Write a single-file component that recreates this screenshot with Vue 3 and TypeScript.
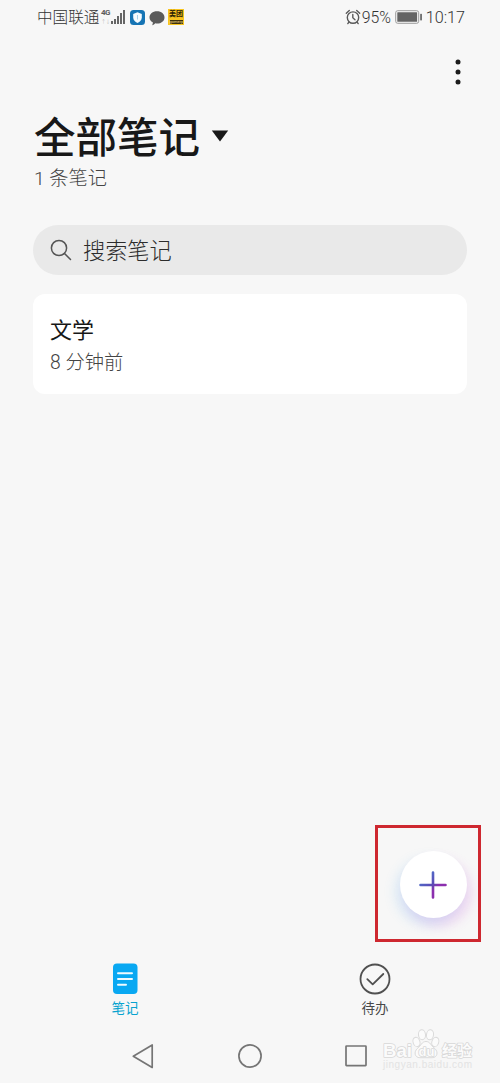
<script setup lang="ts">
import { ref } from 'vue'

interface Note { title: string; time: string }

const notes = ref<Note[]>([{ title: '文学', time: '8 分钟前' }])
const signalBars: number[] = [3, 5, 8, 11, 14]
</script>

<template>
  <main class="screen">
    <header class="status">
      <div class="status-left">
        <span class="carrier">中国联通</span>
        <span class="net"><b>4G</b><i>↑↓</i></span>
        <span class="signal"><i v-for="h in signalBars" :key="h" :style="{ height: h + 'px' }"></i></span>
        <svg class="shield" width="15" height="15" viewBox="0 0 15 15">
          <rect width="15" height="15" rx="3.5" fill="#1674b4" />
          <path d="M7.500 2.300 11.800 4v3.600c0 2.600-1.800 4.300-4.300 5.300-2.500-1-4.300-2.700-4.300-5.300V4Z" fill="#f5fbff" />
          <path d="M7.500 5v4.500" stroke="#a9d0e9" stroke-width="1" />
        </svg>
        <svg class="bubble" width="16" height="15" viewBox="0 0 16 15">
          <path d="M8 .3c4.400 0 7.500 2.600 7.500 6.100S12.400 12.500 8 12.500c-.6 0-1.200 0-1.800-.2-.8 1-1.700 1.700-3 1.900.5-.9.700-1.800.6-2.900C1.700 10.200.5 8.600.5 6.400.5 2.900 3.600.3 8 .3Z" fill="#5b5b5b" />
        </svg>
        <span class="meituan"><b>美团</b><i>gomerp</i></span>
      </div>
      <div class="status-right">
        <svg class="alarm" width="16" height="16" viewBox="0 0 16 16" fill="none" stroke="#5a5a5a" stroke-width="1.400" stroke-linecap="round">
          <circle cx="8" cy="8.600" r="5.700" />
          <path d="M1.300 4.300 4.300 1.500M14.700 4.300 11.700 1.500M7.800 5.500v3.300l2.200 1.900M4 13l-1.200 1.600M12 13l1.200 1.600" />
        </svg>
        <span class="percent">95%</span>
        <svg class="battery" width="28" height="14" viewBox="0 0 28 14">
          <rect x=".7" y=".7" width="23" height="12.600" rx="2" fill="#f5f5f5" stroke="#9b9b9b" />
          <rect x="2.300" y="2.300" width="19.800" height="9.400" rx=".5" fill="#646464" />
          <rect x="25.200" y="3.800" width="1.700" height="6.600" rx=".6" fill="#626262" />
        </svg>
        <span class="clock">10:17</span>
      </div>
    </header>

    <div class="toolbar">
      <svg width="10" height="30" viewBox="0 0 10 30" fill="#1c1c1c">
        <circle cx="5" cy="5" r="2.500" /><circle cx="5" cy="15" r="2.500" /><circle cx="5" cy="25" r="2.500" />
      </svg>
    </div>

    <section class="heading">
      <h1>全部笔记<svg width="18" height="12" viewBox="0 0 18 12"><path d="M.8.500h16.400L9 11.500Z" fill="#191919" /></svg></h1>
      <p>1 条笔记</p>
    </section>

    <div class="search">
      <svg width="22" height="22" viewBox="0 0 22 22" fill="none" stroke="#555" stroke-width="1.500" stroke-linecap="round">
        <circle cx="9" cy="9" r="7.600" /><path d="m14.500 14.500 6 6" />
      </svg>
      <span>搜索笔记</span>
    </div>

    <article v-for="note in notes" :key="note.title" class="note">
      <h2>{{ note.title }}</h2>
      <p>{{ note.time }}</p>
    </article>

    <div class="spacer"></div>

    <div class="highlight">
      <button class="fab" aria-label="新建笔记">
        <svg width="30" height="30" viewBox="0 0 30 30" fill="none" stroke="url(#plus)" stroke-width="2.600" stroke-linecap="round">
          <defs>
            <linearGradient id="plus" gradientUnits="userSpaceOnUse" x1="7" y1="7" x2="23" y2="23">
              <stop offset=".1" stop-color="#5265c5" /><stop offset=".48" stop-color="#5c49b4" /><stop offset=".68" stop-color="#8c2fae" />
            </linearGradient>
          </defs>
          <path d="M15 2.500v25M2.500 15h25" />
        </svg>
      </button>
    </div>

    <nav class="tabs">
      <div class="tab active">
        <svg width="32" height="32" viewBox="0 0 32 32">
          <rect x="4" y=".5" width="24.500" height="30.500" rx="4" fill="#09a8f2" />
          <path d="M9 10.200h14M9 16h14M9 21.800h8" stroke="#effaff" stroke-width="2" stroke-linecap="round" />
        </svg>
        <span>笔记</span>
      </div>
      <div class="tab">
        <svg width="32" height="32" viewBox="0 0 32 32" fill="none" stroke="#505050" stroke-width="1.800">
          <circle cx="16" cy="16" r="14.500" /><path d="m8.300 16.200 5.400 5.200L24.300 11" stroke-linecap="round" stroke-linejoin="round" />
        </svg>
        <span>待办</span>
      </div>
    </nav>

    <footer class="system">
      <svg width="260" height="30" viewBox="0 0 260 30" fill="none" stroke="#757575" stroke-width="1.700" stroke-linejoin="round">
        <path d="M32.200 4v22.400L13.300 15.200Z" /><circle cx="130" cy="15" r="11.100" /><rect x="226" y="5" width="20" height="19.600" rx=".5" />
      </svg>
    </footer>

    <div class="watermark">
      <svg width="94" height="46" viewBox="0 0 94 46">
        <g fill="#fbfbfb" stroke="#dadada" stroke-width="1">
          <ellipse cx="36.500" cy="15" rx="3.400" ry="4.800" transform="rotate(-18 36.500 15)" />
          <ellipse cx="42" cy="7.800" rx="3.500" ry="5" transform="rotate(-5 42 7.800)" />
          <ellipse cx="50" cy="7.800" rx="3.500" ry="5" transform="rotate(7 50 7.800)" />
          <ellipse cx="55.300" cy="15" rx="3.400" ry="4.800" transform="rotate(18 55.300 15)" />
          <path d="M46 14.500c4.300 0 4.900 4.200 8.700 7 3.900 3.300 2.700 9.200-2.600 9.200H39.900c-5.300 0-6.300-5.900-2.500-9.200 3.700-2.800 4.300-7 8.600-7Z" />
        </g>
        <g class="wm">
          <text x="3" y="30" class="wm-brand" textLength="29" lengthAdjust="spacingAndGlyphs">Bai</text>
          <text x="38.500" y="28.500" class="wm-du">du</text>
          <text x="62" y="28.500" class="wm-cn" textLength="30">经验</text>
        </g>
        <text x="3" y="41" class="wm-url" textLength="89">jingyan.baidu.com</text>
      </svg>
    </div>
  </main>
</template>

<style>
body { background: #f7f7f7; }
</style>

<style scoped>
* { box-sizing: border-box; margin: 0; padding: 0; }
.screen { position: relative; width: 500px; height: 1083px; display: flex; flex-direction: column; overflow: hidden; background: #f7f7f7; color: #1a1a1a; font-family: Roboto, "Noto Sans CJK SC", sans-serif; }
i { font-style: normal; }
.status { height: 34px; padding: 0 35px 0 37px; display: flex; justify-content: space-between; align-items: center; color: #5c5c5c; }
.status-left, .status-right { display: flex; align-items: center; height: 34px; }
.carrier { font-size: 15.600px; line-height: 34px; width: 64px; padding-top: 1px; white-space: nowrap; font-weight: 300; color: #333; }
.net { width: 10px; height: 16px; display: flex; flex-direction: column; justify-content: space-between; font-size: 8px; line-height: 8px; letter-spacing: -.6px; white-space: nowrap; }
.net i { color: #bbb; font-size: 5px; line-height: 7px; }
.signal { height: 14px; width: 15px; display: flex; align-items: flex-end; gap: 1px; }
.signal i { width: 2px; background: #666; }
.shield { margin-left: 4px; }
.bubble { margin-left: 4px; margin-top: 2px; }
.meituan { width: 16px; height: 16px; margin-left: 3px; background: #f8c520; color: #2a2205; display: flex; flex-direction: column; align-items: center; overflow: hidden; }
.meituan b { font-size: 7px; line-height: 11px; font-weight: 700; }
.meituan i { font-size: 4px; line-height: 4px; background: #3c310d; color: #f7dd88; width: 13px; text-align: center; }
.alarm { margin-top: -1px; }
.percent { margin-left: 1px; font-size: 15.800px; width: 32px; font-weight: 300; color: #333; }
.battery { margin-left: 1px; }
.clock { font-size: 16.200px; margin-left: 3px; font-weight: 300; color: #333; }
.toolbar { height: 76px; padding: 23px 37px 0 0; display: flex; justify-content: flex-end; }
.heading { height: 115px; padding: 2px 0 0 34px; }
h1 { height: 54px; line-height: 56px; font-size: 41.500px; font-weight: 500; display: flex; align-items: center; color: #181818; }
h1 svg { margin: -6px 0 0 11px; }
.heading p { font-size: 19.200px; line-height: 25px; color: #444; font-weight: 300; }
.search { flex: none; height: 50px; margin: 0 33px; border-radius: 25px; padding-left: 17px; background: #e9e9e9; display: flex; align-items: center; gap: 11px; font-size: 22.200px; font-weight: 300; line-height: 50px; color: #2c2c2c; }
.search span { padding-top: 2px; }
.note { height: 100px; flex: none; margin: 19px 33px 0; padding: 20px 17px; border-radius: 12px; background: #fff; }
h2 { font-size: 22px; line-height: 34px; font-weight: 400; color: #171717; }
.note p { font-size: 19.300px; line-height: 29px; color: #444; font-weight: 300; }
.spacer { flex: 1; }
.highlight { flex: none; align-self: flex-end; width: 106px; height: 117px; margin-right: 19px; border: 3px solid #ce2830; padding: 23px 0 0 22px; }
.fab { width: 67px; height: 67px; border: 0; border-radius: 50%; background: #fff; display: flex; align-items: center; justify-content: center; box-shadow: -5px 7px 12px rgba(75,170,245,.17), 5px 8px 12px rgba(215,85,220,.19); }
.fab svg { margin-left: -1px; }
.tabs { flex: none; height: 87px; padding-top: 21px; display: flex; }
.tab { flex: 1; display: flex; flex-direction: column; align-items: center; font-size: 13.500px; line-height: 20px; color: #484848; gap: 3px; }
.tab.active { color: #08a3cf; }
.system { flex: none; height: 54px; padding-top: 12px; display: flex; justify-content: center; }
.watermark { position: absolute; left: 380px; top: 1027px; }
.wm { fill: #fbfbfb; stroke: #d8d8d8; stroke-width: 1.600px; paint-order: stroke; stroke-linejoin: round; }
.wm-brand { font: 700 19px "Liberation Sans", sans-serif; }
.wm-du { font: 700 13px "Liberation Sans", sans-serif; }
.wm-cn { font: 700 15px "Noto Sans CJK SC", sans-serif; }
.wm-url { font: 10px "Liberation Sans", sans-serif; fill: #e3e3e3; }
</style>
